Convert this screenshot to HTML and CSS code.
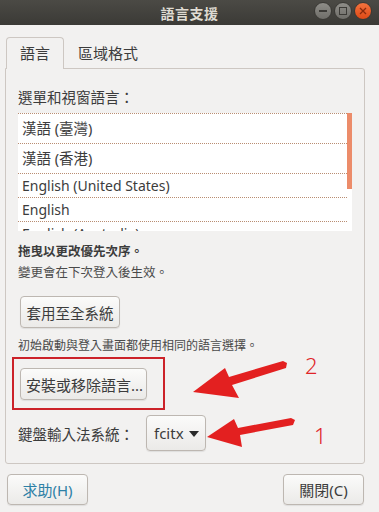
FILE: index.html
```html
<!DOCTYPE html>
<html lang="zh-Hant">
<head>
    <meta charset="UTF-8">
    <meta name="viewport" content="width=device-width, initial-scale=1.0">
    <title>語言支援</title>
    <link rel="stylesheet" href="styles.css">
</head>
<body>
    <div class="window">
        <header class="titlebar">
            <span class="title">語言支援</span>
            <div class="controls">
                <span class="ctl ctl-min"><i></i></span>
                <span class="ctl ctl-max"><i></i></span>
                <span class="ctl ctl-close">
                    <svg width="8" height="8" viewBox="0 0 8 8"><path d="M1 1L7 7M7 1L1 7" stroke="#8a2a0c" stroke-width="1.3"/></svg>
                </span>
            </div>
        </header>

        <main class="content">
            <div class="tabs">
                <div class="tab active">語言</div>
                <div class="tab">區域格式</div>
            </div>

            <section class="panel">
                <p class="label">選單和視窗語言：</p>

                <div class="lang-list">
                    <ul>
                        <li class="cjk">漢語 (臺灣)</li>
                        <li class="cjk">漢語 (香港)</li>
                        <li>English (United States)</li>
                        <li>English</li>
                        <li>English (Australia)</li>
                    </ul>
                    <div class="scroll-track"><div class="scroll-thumb"></div></div>
                </div>

                <p class="hint strong">拖曳以更改優先次序。</p>
                <p class="hint">變更會在下次登入後生效。</p>

                <button class="btn apply-btn">套用至全系統</button>

                <p class="note">初始啟動與登入畫面都使用相同的語言選擇。</p>

                <div class="highlight">
                    <button class="btn install-btn">安裝或移除語言...</button>
                </div>

                <div class="im-row">
                    <span class="im-label">鍵盤輸入法系統：</span>
                    <button class="btn combo">fcitx<span class="caret"></span></button>
                </div>
            </section>

            <div class="actions">
                <button class="btn help-btn">求助(H)</button>
                <button class="btn close-btn">關閉(C)</button>
            </div>
        </main>

        <!-- red hand-drawn annotations on top of the dialog -->
        <svg class="annotations" width="379" height="512" viewBox="0 0 379 512">
            <polygon fill="#e32020" points="193,392 225,368 229,377 283,361 287,363 286,368 232,385 239,398"/>
            <polygon fill="#e32020" points="207,437 234,419 238,428 291,418 295,420 293,425 240,435 242,447"/>
            <text x="305" y="374" class="anno-num">2</text>
            <text x="314" y="444" class="anno-num">1</text>
        </svg>
    </div>
</body>
</html>
```

FILE: styles.css
```css
* {
    box-sizing: border-box;
}
body {
    margin: 0;
    background-color: #f2f1f0;
    font-family: "Noto Sans", "Noto Sans CJK TC", sans-serif;
    color: #3c3c3c;
}
.window {
    position: relative;
    width: 379px;
    height: 512px;
    overflow: hidden;
    background-color: #f2f1f0;
}

/* title bar */
.titlebar {
    height: 25px;
    background: linear-gradient(#4b4a45, #3b3a36);
    display: flex;
    align-items: center;
    justify-content: center;
    position: relative;
}
.title {
    color: #dfdbd2;
    font-weight: bold;
    font-size: 14px;
    letter-spacing: 0.5px;
}
.controls {
    position: absolute;
    right: 7px;
    top: 2px;
    display: flex;
    gap: 2px;
}
.ctl {
    width: 18px;
    height: 18px;
    border-radius: 50%;
    background: linear-gradient(#8e8d88, #6f6e69);
    display: flex;
    align-items: center;
    justify-content: center;
    border: 1px solid #3a3935;
}
.ctl-min i {
    width: 8px;
    height: 2px;
    background-color: #3c3b37;
}
.ctl-max i {
    width: 8px;
    height: 8px;
    border: 1.5px solid #3c3b37;
}
.ctl-close {
    background: linear-gradient(#f3733e, #df4a16);
}

/* main area */
.content {
    padding: 12px 14px 0 5px;
}
.tabs {
    display: flex;
    margin-left: 1px;
    height: 31px;
}
.tab {
    font-size: 15px;
    line-height: 30px;
    padding: 0 13px;
    border: 1px solid transparent;
    border-bottom: none;
}
.tab.active {
    border-color: #cdc7c2;
    border-radius: 4px 4px 0 0;
    background-color: #f2f1f0;
    margin-bottom: -1px;
    position: relative;
    z-index: 1;
    height: 32px;
}
.panel {
    width: 360px;
    border: 1px solid #cdc7c2;
    border-radius: 0 3px 3px 3px;
    padding: 17px 12px 12px 12px;
}
.label {
    margin: 0 0 5px 0;
    font-size: 14.5px;
    line-height: 22px;
}

/* language list */
.lang-list {
    display: flex;
    height: 118px;
    background-color: #fff;
    overflow: hidden;
}
.lang-list ul {
    list-style: none;
    margin: 0;
    padding: 0;
    flex: 1;
}
.lang-list li {
    border-top: 1px dotted #b98d72;
    height: 24px;
    line-height: 23px;
    padding-left: 4px;
    font-size: 14px;
    white-space: nowrap;
}
.lang-list li.cjk {
    height: 30px;
    line-height: 29px;
    font-size: 14.5px;
}
.scroll-track {
    width: 5px;
}
.scroll-thumb {
    height: 76px;
    background-color: #ec8c6a;
}

.hint {
    margin: 0;
    font-size: 12.5px;
    line-height: 21px;
    color: #4a4a4a;
}
.hint.strong {
    margin-top: 10px;
    font-weight: bold;
    color: #3c3c3c;
}
.note {
    margin: 9px 0 0 0;
    font-size: 12px;
    line-height: 18px;
    color: #4a4a4a;
}

/* buttons */
.btn {
    font-family: inherit;
    color: #3c3c3c;
    background: linear-gradient(#fbfbfa, #ebeae8);
    border: 1px solid #bdb7b1;
    border-radius: 4px;
    box-shadow: 0 1px 1px rgba(0,0,0,0.08);
    font-size: 15px;
    height: 32px;
    padding: 0 5px;
    white-space: nowrap;
    cursor: pointer;
}
.apply-btn {
    display: block;
    margin-top: 13px;
    margin-left: 2px;
    width: 100px;
    font-size: 14.5px;
}
.highlight {
    display: inline-block;
    margin: 2px 0 0 -6px;
    border: 2px solid #cc2229;
    padding: 9px 16px 8px 6px;
}
.install-btn {
    display: block;
    width: 127px;
}
.im-row {
    display: flex;
    align-items: center;
    margin-top: 5px;
    height: 36px;
}
.im-label {
    font-size: 14.5px;
    width: 128px;
}
.combo {
    height: 36px;
    width: 60px;
    display: flex;
    align-items: center;
    gap: 5px;
    padding: 0 7px;
}
.caret {
    width: 0;
    height: 0;
    border-left: 5px solid transparent;
    border-right: 5px solid transparent;
    border-top: 6px solid #2a2a2a;
    margin-top: 1px;
}

/* dialog actions */
.actions {
    display: flex;
    justify-content: space-between;
    margin-top: 10px;
    padding: 0 1px 0 2px;
}
.help-btn,
.close-btn {
    width: 81px;
    height: 31px;
}
.help-btn {
    color: #2d80a6;
}

/* annotations */
.annotations {
    position: absolute;
    top: 0;
    left: 0;
    pointer-events: none;
}
.anno-num {
    fill: #e02428;
    font-family: "Noto Sans", sans-serif;
    font-size: 22px;
    font-weight: 300;
}
```
